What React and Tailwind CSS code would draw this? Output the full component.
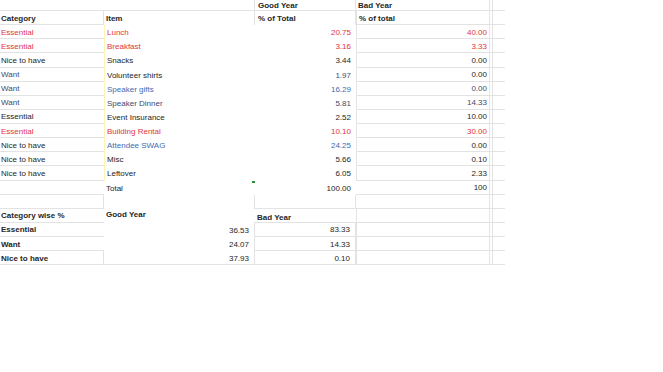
import React from 'react';

const R = 'text-[#e0353d]';
const B = 'text-[#3d6cb4]';
const S = 'text-[#3c4a70]';
const K = 'text-[#262626]';

const rows = [
  { h: 'h-[11px]', cells: [null, null, ['Good Year', K, 'b'], ['Bad Year', K, 'b']], lines: { a: 'border-b', b: 'border-b', c: 'border-l border-r border-b', d: 'border-b', e: 'border-b' } },
  { cells: [['Category', K, 'b'], ['Item', K, 'b'], ['% of Total', K, 'b'], ['% of total', K, 'b']], lines: { a: 'border-b border-r', b: '', c: 'border-l border-r', d: 'border-b border-l', e: 'border-b' } },
  { cells: [['Essential', R], ['Lunch', R], ['20.75', R], ['40.00', R]] },
  { cells: [['Essential', R], ['Breakfast', R], ['3.16', R], ['3.33', R]] },
  { cells: [['Nice to have', K], ['Snacks', K], ['3.44', K], ['0.00', K]] },
  { cells: [['Want', S], ['Volunteer shirts', K], ['1.97', S], ['0.00', K]] },
  { cells: [['Want', S], ['Speaker gifts', B], ['16.29', B], ['0.00', S]] },
  { cells: [['Want', S], ['Speaker Dinner', S], ['5.81', S], ['14.33', S]] },
  { cells: [['Essential', K], ['Event Insurance', K], ['2.52', K], ['10.00', K]] },
  { cells: [['Essential', R], ['Building Rental', R], ['10.10', R], ['30.00', R]] },
  { cells: [['Nice to have', K], ['Attendee SWAG', B], ['24.25', B], ['0.00', K]] },
  { cells: [['Nice to have', K], ['Misc', K], ['5.66', K], ['0.10', K]] },
  { cells: [['Nice to have', K], ['Leftover', K], ['6.05', K], ['2.33', K]] },
  { cells: [null, ['Total', K], ['100.00', K], ['100', K]], lines: { a: 'border-b', b: '', c: '', d: 'border-b', e: 'border-b' }, marker: true },
  { cells: [null, null, null, null], lines: { a: 'border-b border-r', b: '', c: 'border-b border-l border-r', d: 'border-b', e: 'border-b' } },
  { cells: [['Category wise %', K, 'b'], ['Good Year', K, 'b', '-translate-y-[2px]'], ['Bad Year', K, 'b', 'translate-y-[2px]'], null], lines: { a: 'border-b', b: '', c: 'border-b', d: 'border-b border-l', e: 'border-b' } },
  { cells: [['Essential', K, 'b'], ['36.53', K, 'r'], ['83.33', K, 'r'], null], lines: { a: 'border-b', b: '', c: 'border-b border-l border-r', d: 'border-b border-l', e: 'border-b' } },
  { cells: [['Want', K, 'b'], ['24.07', K, 'r'], ['14.33', K, 'r'], null], lines: { a: 'border-b', b: '', c: 'border-b border-l border-r', d: 'border-b border-l', e: 'border-b' } },
  { cells: [['Nice to have', K, 'b'], ['37.93', K, 'r'], ['0.10', K, 'r'], null], lines: { a: 'border-b border-r', b: 'border-b', c: 'border-b border-l border-r', d: 'border-b border-l', e: 'border-b' } },
];

const defaultLines = { a: 'border-b', b: 'border-l border-l-[#fdf3b5]', c: '', d: 'border-b border-l', e: 'border-b' };

const Cell = ({ w, data, numeric, lines, pad = 'pr-[5px]', padL = 'pl-[2px]' }) => {
  const [text, color, flag, extra] = data || [];
  const right = numeric || flag === 'r';
  return (
    <div
      className={`${w} h-full shrink-0 flex items-center pt-[2px] whitespace-nowrap overflow-hidden border-[#e3e3e3] ${lines} ${
        right ? `justify-end ${pad}` : padL
      } ${flag === 'b' ? 'font-bold' : ''} ${color || ''}`}
    >
      <span className={extra || ''}>{text}</span>
    </div>
  );
};

export default function App() {
  return (
    <div className="w-[663px] h-[372px] bg-white overflow-hidden font-['Liberation_Sans',Arial,sans-serif] text-[8px] leading-none">
      {rows.map((row, i) => {
        const lines = row.lines || defaultLines;
        const numC = i >= 2 && i <= 13;
        return (
          <div key={i} className={`relative flex ${row.h || 'h-[14.14px]'}`}>
            <Cell w="w-[104px]" data={row.cells[0]} lines={lines.a} padL="pl-[1px]" />
            <Cell w="w-[150px]" data={row.cells[1]} lines={lines.b} />
            <Cell w="w-[102px]" data={row.cells[2]} numeric={numC} lines={lines.c} padL="pl-[3px]" />
            <Cell w="w-[134px]" data={row.cells[3]} numeric={numC} pad="pr-[2px]" lines={`${lines.d} border-r`} />
            <div className={`w-[2px] shrink-0 border-[#e3e3e3] ${lines.e}`} />
            <div className={`w-[13px] shrink-0 border-[#e3e3e3] border-l ${lines.e}`} />
            {row.marker && (
              <div className="absolute left-[252px] top-0 w-[3px] h-[2px] bg-[#2e8b3a]" />
            )}
          </div>
        );
      })}
    </div>
  );
}
